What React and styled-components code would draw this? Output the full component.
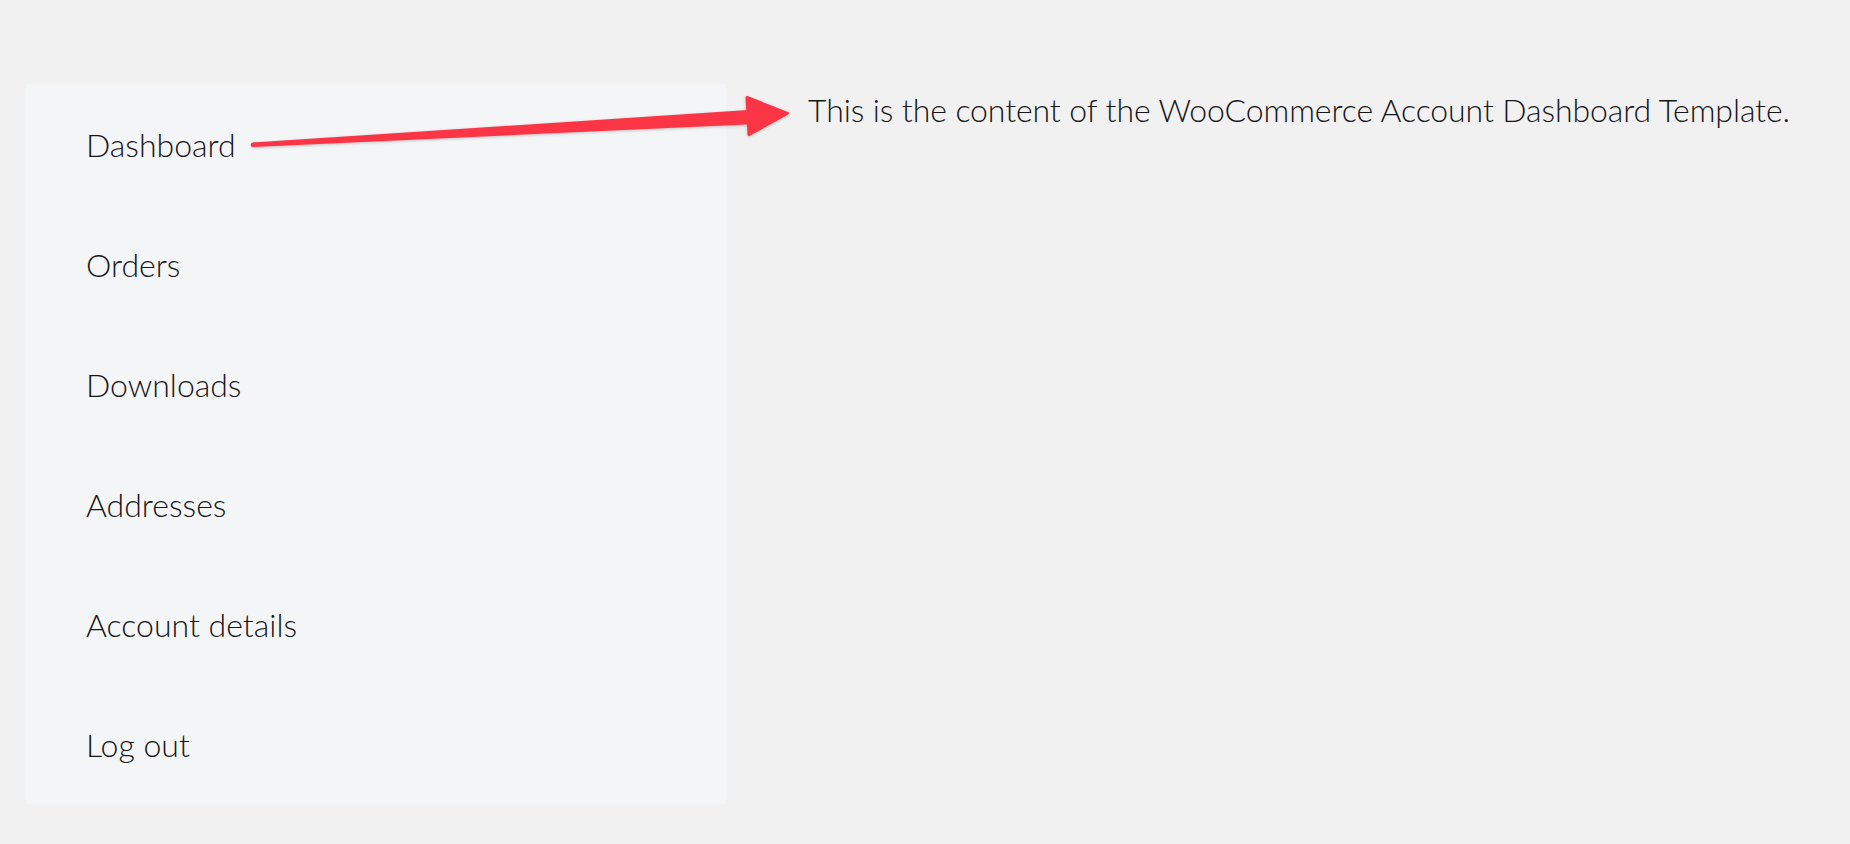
import React from "react";
import styled, { createGlobalStyle } from "styled-components";

const Global = createGlobalStyle`
  html, body { margin: 0; padding: 0; background: #f1f1f1; }
  body { font-family: Lato, "Noto Sans", sans-serif; color: #1e1e1e; }
`;

const Page = styled.div`
  position: relative;
  display: flex;
  align-items: flex-start;
  gap: 82px;
  padding: 84px 26px 40px;
  min-height: 844px;
  box-sizing: border-box;
`;

const Nav = styled.nav`
  width: 700px;
  flex: none;
  background: #f4f5f7;
  display: flex;
  flex-direction: column;
`;

const NavItem = styled.a`
  height: 120px;
  display: flex;
  align-items: center;
  padding-left: 60px;
  font-size: 32px;
  font-weight: 300;
  letter-spacing: 0;
  color: #161616;
  text-decoration: none;
  cursor: pointer;
`;

const Content = styled.p`
  margin: 7px 0 0;
  font-size: 32px;
  font-weight: 300;
  line-height: 38px;
  letter-spacing: -0.1px;
  color: #161616;
`;

const Arrow = styled.svg`
  position: absolute;
  left: 240px;
  top: 85px;
  width: 560px;
  height: 70px;
  overflow: visible;
  filter: drop-shadow(0 1px 1.5px rgba(0, 0, 0, 0.22));
  pointer-events: none;
`;

const items = ["Dashboard", "Orders", "Downloads", "Addresses", "Account details", "Log out"];

export default function App() {
  return (
    <>
      <Global />
      <Page>
        <Nav>
          {items.map((t) => (
            <NavItem key={t}>{t}</NavItem>
          ))}
        </Nav>
        <Content>This is the content of the WooCommerce Account Dashboard Template.</Content>
        <Arrow viewBox="0 0 560 70">
          <g fill="#fb3446">
            <polygon points="12.9,57.5 512,24.7 512,39.3 13.1,61.9" />
            <circle cx="13" cy="59.7" r="2.2" />
            <polygon
              points="507,12.5 547.5,28.3 509,49.5"
              stroke="#fb3446"
              strokeWidth="3"
              strokeLinejoin="round"
            />
          </g>
        </Arrow>
      </Page>
    </>
  );
}
